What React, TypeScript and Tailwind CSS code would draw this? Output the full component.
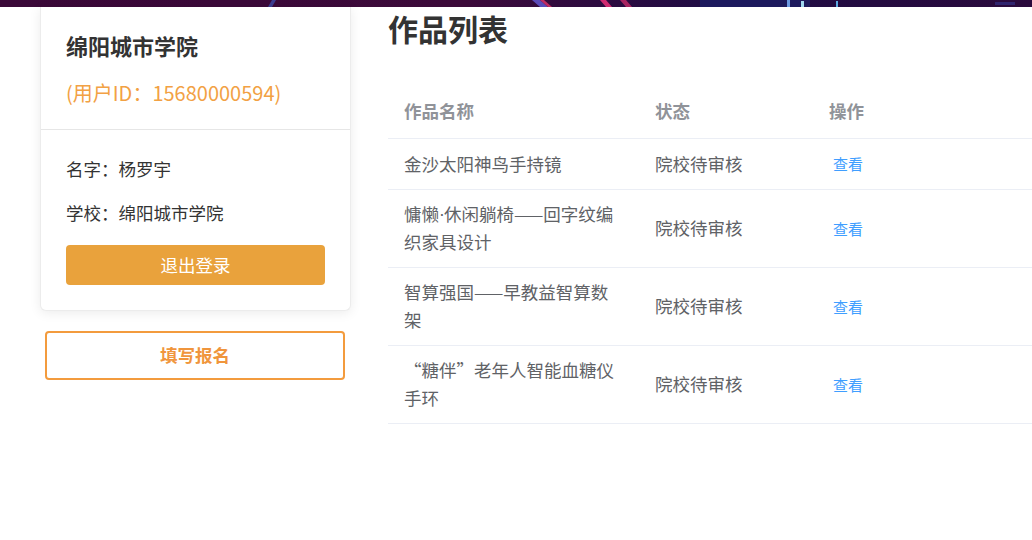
const works = [
  { name: "金沙太阳神鸟手持镜", status: "院校待审核" },
  { name: "慵懒·休闲躺椅——回字纹编织家具设计", status: "院校待审核" },
  { name: "智算强国——早教益智算数架", status: "院校待审核" },
  { name: "“糖伴”老年人智能血糖仪手环", status: "院校待审核" },
];

function Banner() {
  return (
    <svg className="block w-full h-[7px]" viewBox="0 0 1032 7" preserveAspectRatio="none">
      <defs>
        <linearGradient id="bg" x1="0" y1="0" x2="1" y2="0">
          <stop offset="0" stopColor="#3a0838" />
          <stop offset="0.45" stopColor="#3c0a3a" />
          <stop offset="0.7" stopColor="#1e0c44" />
          <stop offset="1" stopColor="#2a0a3c" />
        </linearGradient>
      </defs>
      <rect width="1032" height="7" fill="url(#bg)" />
      <polygon points="268,7 272,0 276,0 272,7" fill="#3c3c90" />
      <polygon points="532,0 540,0 548,7 540,7" fill="#5a4ab8" />
      <polygon points="540,0 544,0 552,7 548,7" fill="#c02a62" />
      <polygon points="600,0 606,0 612,7 606,7" fill="#d02a70" />
      <polygon points="620,0 626,0 632,7 626,7" fill="#a82460" />
      <rect x="700" y="0" width="110" height="7" fill="#1a2470" opacity="0.6" />
      <rect x="787" y="0" width="3" height="7" fill="#6a98e0" />
      <rect x="801" y="1" width="3" height="6" fill="#a0d8f0" />
      <rect x="836" y="1" width="2" height="6" fill="#5aa8e0" />
      <rect x="995" y="2" width="20" height="3" fill="#3a4ab8" opacity="0.4" />
    </svg>
  );
}

function WorkName({ name }: { name: string }) {
  // the middle dot is narrow in the original font
  const [head, tail] = name.split("·");
  if (tail === undefined) return <>{name}</>;
  return (
    <>
      {head}
      <span className="inline-block w-[5px] text-center align-top leading-7 font-['Liberation_Sans',sans-serif]">·</span>
      {tail}
    </>
  );
}

export default function App() {
  return (
    <div className="w-[1032px] h-[540px] overflow-hidden bg-white font-['Microsoft_YaHei','Noto_Sans_CJK_SC',sans-serif]">
      <Banner />

      <div className="flex pl-[40px]">
        <div className="w-[311px] shrink-0">
          <div className="bg-white rounded-b-md border border-t-0 border-[#ececec] shadow-[0_2px_12px_rgba(0,0,0,0.08)]">
            <div className="px-[25px] pt-[24px] pb-[23px] border-b border-[#e6e6e6]">
              <p className="text-[22px] leading-7 font-bold text-[#333]">绵阳城市学院</p>
              <p className="mt-[21px] text-[20px] leading-[26px] text-[#f2a144]">(用户ID：15680000594)</p>
            </div>
            <div className="px-[25px] pt-[27px] pb-[25px]">
              <p className="text-[17.5px] leading-6 text-[#333]">名字：杨罗宇</p>
              <p className="mt-[20px] text-[17.5px] leading-6 text-[#333]">学校：绵阳城市学院</p>
              <button className="mt-[20px] w-full h-10 rounded bg-[#e9a23c] text-white text-[17.5px]">
                退出登录
              </button>
            </div>
          </div>

          <button className="mt-[20px] ml-[5px] w-[300px] h-[49px] rounded border-2 border-[#f39b3d] bg-white text-[17.5px] font-bold text-[#f0953c]">
            填写报名
          </button>
        </div>

        <div className="ml-[37px] flex-1">
          <h1 className="pt-[1px] text-[30px] leading-10 font-bold text-[#333]">作品列表</h1>

          <div className="mt-[42px] text-[17.5px]">
            <div className="grid grid-cols-[251px_174px_1fr] border-b border-[#ebeef5] leading-7 pt-[7px] pb-[13px] font-bold text-[#909399]">
              <div className="px-4">作品名称</div>
              <div className="px-4">状态</div>
              <div className="px-4">操作</div>
            </div>
            {works.map((w) => (
              <div
                key={w.name}
                className="grid grid-cols-[251px_174px_1fr] items-center border-b border-[#ebeef5] leading-7 pt-[10px] pb-[11px] text-[#606266]"
              >
                <div className="pl-4 pr-[14px]">
                  <WorkName name={w.name} />
                </div>
                <div className="px-4">{w.status}</div>
                <div className="pl-5">
                  <span className="text-[15px] text-[#409eff]">查看</span>
                </div>
              </div>
            ))}
          </div>
        </div>
      </div>
    </div>
  );
}
